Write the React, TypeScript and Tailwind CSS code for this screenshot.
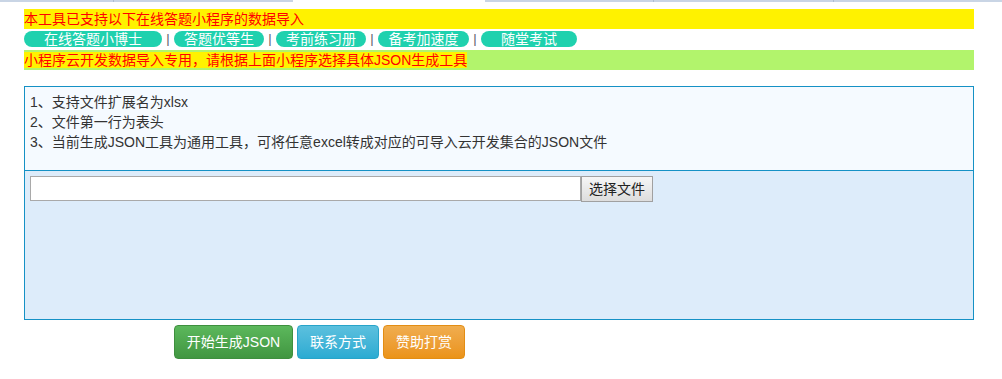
import React from 'react';

const apps = [
  { name: '在线答题小博士', w: 'w-[138px]' },
  { name: '答题优等生', w: 'w-[90px]' },
  { name: '考前练习册', w: 'w-[90px]' },
  { name: '备考加速度', w: 'w-[91px]' },
  { name: '随堂考试', w: 'w-[96px]' },
];

const tips = [
  '1、支持文件扩展名为xlsx',
  '2、文件第一行为表头',
  '3、当前生成JSON工具为通用工具，可将任意excel转成对应的可导入云开发集合的JSON文件',
];

export default function App() {
  return (
    <div className="min-h-[379px] bg-white text-[14px] font-['Liberation_Sans','Noto_Sans_CJK_SC',sans-serif]">
      {/* 顶部细线 */}
      <div className="flex h-[2px]">
        <div className="w-[113px] bg-[#c9d5e5]" />
        <div className="w-px bg-[#aebdd0]" />
        <div className="w-[179px] bg-[#c9d5e5]" />
        <div className="w-[192px]" />
        <div className="flex-1 flex">
          <div className="w-[168px] bg-[#c9d5e5]" />
          <div className="w-px bg-[#aebdd0]" />
          <div className="w-[179px] bg-[#c9d5e5]" />
          <div className="w-px bg-[#aebdd0]" />
          <div className="flex-1 bg-[#c9d5e5]" />
        </div>
      </div>

      <div className="pl-[24px] pt-[7px] w-[974px]">
        <div className="bg-[#fff200] text-[#ff0000] h-[20px] leading-[20px]">
          本工具已支持以下在线答题小程序的数据导入
        </div>

        {/* 小程序列表 */}
        <div className="flex items-center h-[16px] mt-[2px] leading-[16px]">
          {apps.map((a, i) => (
            <React.Fragment key={a.name}>
              {i > 0 && <span className="w-[12px] text-center text-[#5a5a6a] text-[13px]">|</span>}
              <span className={`${a.w} h-[16px] rounded-full bg-[#1fd1ae] text-white text-center`}>{a.name}</span>
            </React.Fragment>
          ))}
        </div>

        <div className="bg-[#b2f46c] h-[20px] leading-[20px] mt-[3px]">
          <span className="bg-[#fff200] text-[#ff0000]">小程序云开发数据导入专用，请根据上面小程序选择具体JSON生成工具</span>
        </div>

        {/* 主面板 */}
        <div className="mt-[16px] border border-[#1591c5] w-[950px]">
          <div className="h-[83px] bg-[#f5faff] pl-[5px] pt-[5px] text-[#333] leading-[20px]">
            {tips.map(t => <div key={t}>{t}</div>)}
          </div>
          <div className="h-[149px] bg-[#ddecfa] border-t border-[#1591c5] pl-[5px] pt-[5px]">
            <div className="flex">
              <input className="w-[551px] h-[25px] bg-white border border-[#a9a9a9] outline-none" readOnly />
              <button className="w-[72px] h-[26px] border border-[#a0a0a0] bg-gradient-to-b from-[#f6f6f6] to-[#dddddd] text-[#222] text-[14px]">
                选择文件
              </button>
            </div>
          </div>
        </div>

        {/* 操作按钮 */}
        <div className="flex gap-[4px] ml-[150px] mt-[5px]">
          <button className="w-[119px] h-[34px] rounded-[4px] border border-[#3e8f3e] bg-gradient-to-b from-[#5cb85c] to-[#419641] text-white">
            开始生成JSON
          </button>
          <button className="w-[82px] h-[34px] rounded-[4px] border border-[#28a4c9] bg-gradient-to-b from-[#5bc0de] to-[#2aabd2] text-white">
            联系方式
          </button>
          <button className="w-[82px] h-[34px] rounded-[4px] border border-[#e38d13] bg-gradient-to-b from-[#f0ad4e] to-[#eb9316] text-white">
            赞助打赏
          </button>
        </div>
      </div>
    </div>
  );
}
